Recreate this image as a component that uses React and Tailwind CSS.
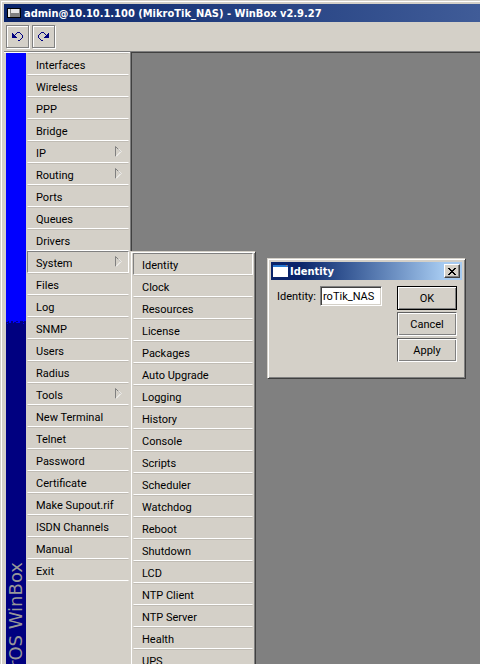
import React from "react";

const MENU = [
  "Interfaces", "Wireless", "PPP", "Bridge", "IP", "Routing", "Ports", "Queues",
  "Drivers", "System", "Files", "Log", "SNMP", "Users", "Radius", "Tools",
  "New Terminal", "Telnet", "Password", "Certificate", "Make Supout.rif",
  "ISDN Channels", "Manual", "Exit",
];
const WITH_SUBMENU = ["IP", "Routing", "System", "Tools"];
const SYSTEM_MENU = [
  "Identity", "Clock", "Resources", "License", "Packages", "Auto Upgrade",
  "Logging", "History", "Console", "Scripts", "Scheduler", "Watchdog", "Reboot",
  "Shutdown", "LCD", "NTP Client", "NTP Server", "Health", "UPS",
];

function MenuItem({ label, active, arrow, children }) {
  return (
    <li className="relative">
      <button
        type="button"
        className={
          "flex h-[22px] w-full items-center justify-between border pt-1 pr-1.5 pl-2 text-left whitespace-nowrap " +
          (active
            ? "border-t-[#808080] border-r-white border-b-white border-l-[#808080]"
            : "border-x-transparent border-t-[#c0bcb4] border-b-white")
        }
      >
        {label}
        {arrow && (
          <svg width="7" height="11" viewBox="0 0 7 11" fill="none" className="mb-1.5" aria-hidden="true">
            <path d="M.5 10.5V.5L5.500 5.5" stroke="#808080" />
            <path d="M1 10.5L6 5.500L3.500 3" stroke="#fff" />
          </svg>
        )}
      </button>
      {children}
    </li>
  );
}

function ToolButton({ label, redo }) {
  return (
    <button
      type="button"
      aria-label={label}
      className="flex size-[23px] items-center justify-center border border-[#808080] shadow-[inset_1px_1px_0_#fff,1px_1px_0_#fff]"
    >
      <svg width="11" height="10" viewBox="0 0 11 10" className={redo ? "-scale-x-100" : ""} shapeRendering="crispEdges" aria-hidden="true">
        <path
          d="M0 1h1v1h1v1h1v1h1v1h1v1H0zM3 2h1v1H3zM4 1h1v1H4zM5 0h3v1H5zM8 1h1v1H8zM9 2h1v1H9zM10 3h1v3h-1zM9 6h1v1H9zM8 7h1v1H8zM6 8h2v1H6z"
          fill="#000080"
        />
      </svg>
    </button>
  );
}

function DialogButton({ label, primary }) {
  return (
    <button
      type="button"
      className={
        "h-6 w-[60px] border pt-0.5 shadow-[inset_1px_1px_0_#fff,inset_-1px_-1px_0_#808080] " +
        (primary ? "border-black" : "border-[#606060] border-r-white border-b-white")
      }
    >
      {label}
    </button>
  );
}

export default function App() {
  return (
    <div className="flex h-screen flex-col overflow-hidden bg-[#d4d0c8] pt-px pl-px font-[Roboto,sans-serif] text-[11px] leading-4 text-black">
      <div className="flex min-h-0 flex-1 flex-col border-t border-l border-white pt-0.5 pl-0.5">
        <header className="flex h-[18px] shrink-0 items-center gap-[3px] bg-linear-to-r from-[#0a246a] to-[#405c98] pl-[3px] text-white">
          <svg width="14" height="10" viewBox="0 0 14 10" aria-hidden="true">
            <path d="M0 0h14v10H0z" fill="#000" />
            <path d="M1 1h12v8H1z" fill="#808080" />
            <path d="M1 1h2v8H1zM4 1h8v4H4z" fill="#e8e8e8" />
          </svg>
          <h1 className="pt-0.5 font-['DejaVu_Sans_Condensed','DejaVu_Sans',sans-serif] text-[11px] font-bold whitespace-nowrap">
            admin@10.10.1.100 (MikroTik_NAS) - WinBox v2.9.27
          </h1>
        </header>
        <div className="flex h-[29px] shrink-0 items-center gap-[3px] pl-0.5">
          <ToolButton label="Undo" />
          <ToolButton label="Redo" redo />
        </div>
        <div className="flex min-h-0 flex-1 border-t border-[#808080]">
          <nav className="flex w-[126px] shrink-0 border-t border-white pl-0.5">
            <div className="flex w-5 shrink-0 flex-col overflow-hidden bg-[#000080]">
              <div className="h-[267px] shrink-0 bg-[#0000ff]" />
              <svg width="20" height="4" viewBox="0 0 20 4" className="shrink-0" shapeRendering="crispEdges" aria-hidden="true">
                <path d="M0 0h20v1h-2v1h-1V1h-3v2h-2V1h-2v1H8v1H7V1H5v2H3V1H2v1H0z" fill="#0000ff" />
                <path d="M1 3h1v1H1zM10 2h2v1h-2zM17 3h1v1h-1z" fill="#0000ff" />
              </svg>
              <span className="mt-auto -mb-14 shrink-0 rotate-180 font-['DejaVu_Sans',sans-serif] text-[18px] leading-5 whitespace-nowrap text-[#989898] [writing-mode:vertical-rl]">
                RouterOS WinBox
              </span>
            </div>
            <ul className="w-[104px] px-px">
              {MENU.map((label) => (
                <MenuItem key={label} label={label} active={label === "System"} arrow={WITH_SUBMENU.includes(label)}>
                  {label === "System" && (
                    <ul className="absolute top-0 left-[103px] z-10 w-[126px] border border-[#d4d0c8] border-r-[#404040] border-b-[#404040] bg-[#d4d0c8] px-0.5 py-px shadow-[inset_1px_1px_0_#fff,inset_-1px_-1px_0_#808080]">
                      {SYSTEM_MENU.map((item) => (
                        <MenuItem key={item} label={item} active={item === "Identity"} />
                      ))}
                    </ul>
                  )}
                </MenuItem>
              ))}
            </ul>
          </nav>
          <main className="relative flex-1 border-l border-[#808080] bg-[#808080] shadow-[inset_1px_1px_0_#404040]">
            <section
              role="dialog"
              aria-labelledby="identity-title"
              className="absolute top-[206px] left-[136px] h-[121px] w-[199px] border border-[#d4d0c8] border-r-[#404040] border-b-[#404040] bg-[#d4d0c8] p-[3px] shadow-[inset_1px_1px_0_#fff,inset_-1px_-1px_0_#808080]"
            >
              <header className="flex h-[18px] items-center bg-linear-to-r from-[#0a246a] from-15% to-[#a6caf0] to-90% px-0.5">
                <svg width="15" height="12" viewBox="0 0 15 12" aria-hidden="true">
                  <path d="M0 0h15v12H0z" fill="#fff" />
                  <path d="M0 0h15v2H0z" fill="#2878d0" />
                  <path d="M13 0h1v1h-1z" fill="#e06030" />
                </svg>
                <h2 id="identity-title" className="flex-1 pt-0.5 pl-0.5 font-['DejaVu_Sans_Condensed','DejaVu_Sans',sans-serif] text-[11px] font-bold text-white">
                  Identity
                </h2>
                <button
                  type="button"
                  aria-label="Close"
                  className="flex h-3.5 w-4 items-center justify-center border border-white border-r-[#404040] border-b-[#404040] bg-[#d4d0c8] shadow-[inset_-1px_-1px_0_#808080]"
                >
                  <svg width="8" height="7" viewBox="0 0 8 7" shapeRendering="crispEdges" aria-hidden="true">
                    <path d="M0 0h2v1h1v1h2V1h1V0h2v1H7v1H6v1H5v1h1v1h1v1h1v1H6V6H5V5H3v1H2v1H0V6h1V5h1V4h1V3H2V2H1V1H0z" fill="#000" />
                  </svg>
                </button>
              </header>
              <form className="flex items-start pt-1.5 pr-[5px] pl-1.5" onSubmit={(e) => e.preventDefault()}>
                <label htmlFor="identity" className="w-[43px] pt-[3px]">Identity:</label>
                <input
                  id="identity"
                  defaultValue="roTik_NAS"
                  className="h-5 w-[62px] border border-[#808080] border-r-white border-b-white bg-white pt-px pl-0.5 shadow-[inset_1px_1px_0_#404040,inset_-1px_-1px_0_#d4d0c8] outline-none"
                />
                <div className="ml-auto flex flex-col gap-0.5">
                  <DialogButton label="OK" primary />
                  <DialogButton label="Cancel" />
                  <DialogButton label="Apply" />
                </div>
              </form>
            </section>
          </main>
        </div>
      </div>
    </div>
  );
}
